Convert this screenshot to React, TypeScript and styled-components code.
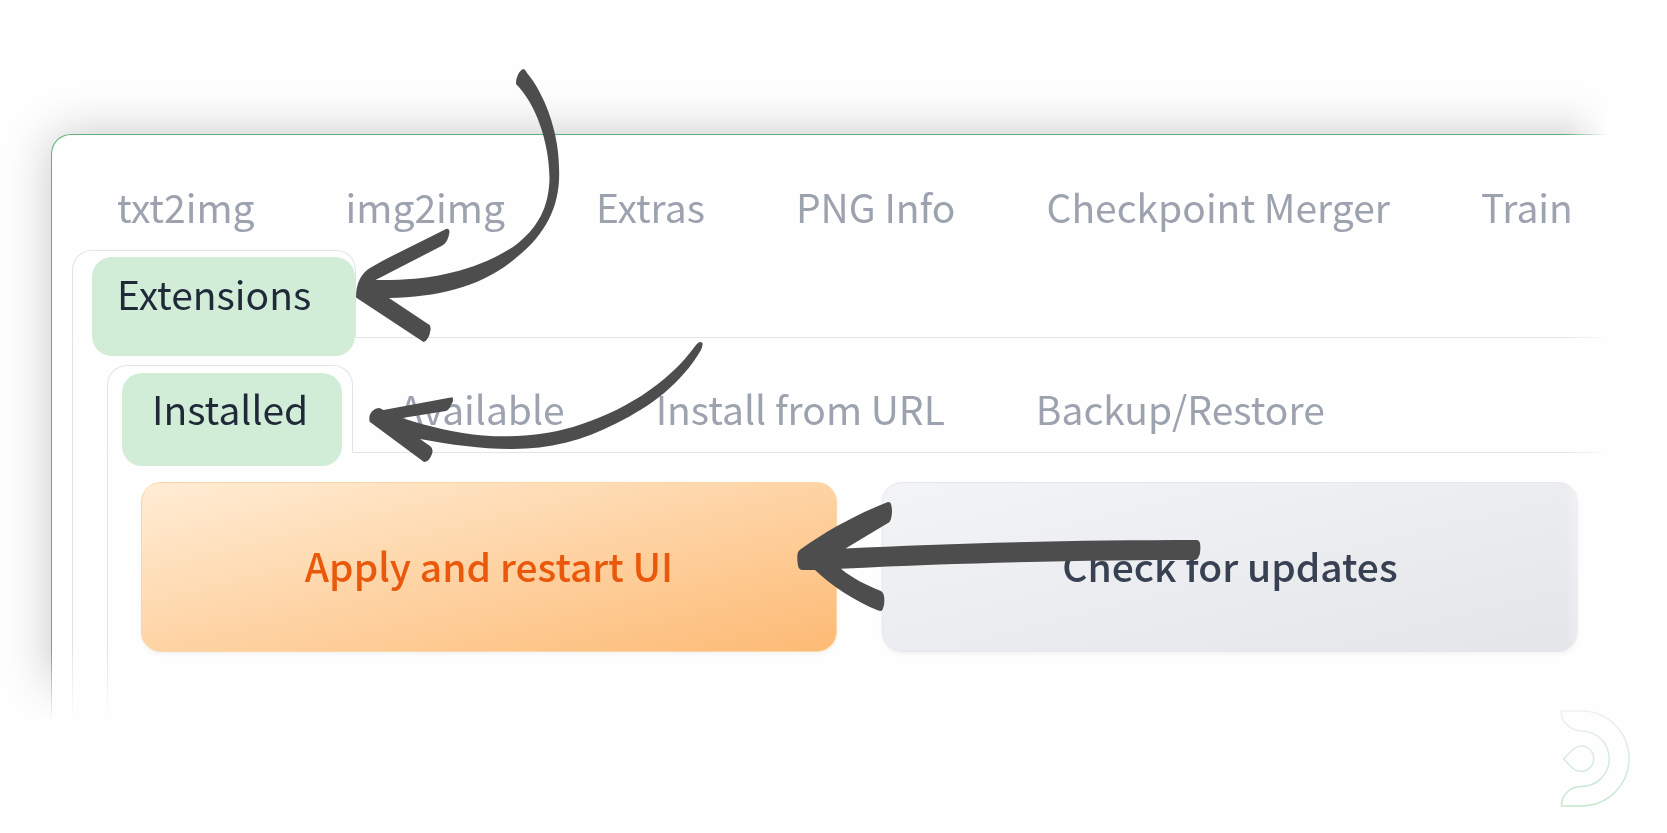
import React from "react";
import styled, { createGlobalStyle } from "styled-components";

const GlobalStyle = createGlobalStyle`
  *, *::before, *::after { box-sizing: border-box; }
  body {
    margin: 0;
    background: #fefefe;
    font-family: "Noto Sans CJK SC", "Noto Sans", sans-serif;
  }
`;

const Page = styled.main`
  min-height: 100vh;
  display: flex;
  flex-direction: column;
  overflow: hidden;
`;

/* Fades the window out towards the right and the bottom edge. */
const Fade = styled.div`
  padding: 134px 16px 0 51px;
  mask-image:
    linear-gradient(to right, #000 calc(100% - 102px), transparent calc(100% - 60px)),
    linear-gradient(to bottom, #000 calc(100% - 72px), transparent 100%);
  mask-composite: intersect;
`;

const Window = styled.section`
  padding: 28px 16px 0 20px;
  border: 1px solid #5cb27a;
  border-bottom: 0;
  border-radius: 20px 20px 0 0;
  background: #fefefe;
  box-shadow: 0 0 48px rgba(0, 0, 0, 0.22);
`;

const TabList = styled.div`
  display: flex;
  flex-wrap: wrap;
  column-gap: 1px;
  border-bottom: 1px solid #e3e4e7;
`;

/* The active tab is one pixel taller, so that it covers the line below the list. */
const Tab = styled.button<{ $active?: boolean }>`
  height: ${(p) => (p.$active ? 88 : 87)}px;
  padding: 0 44px 2px;
  border: 1px solid transparent;
  border-radius: 20px 20px 0 0;
  background: none;
  color: ${(p) => (p.$active ? "#1f2937" : "#9ca3af")};
  font: inherit;
  font-size: 39px;
  line-height: 56px;
  white-space: nowrap;
  cursor: pointer;
  ${(p) => p.$active && "border-color: #e3e4e7; border-bottom-color: #fefefe; background: #fefefe;"}
`;

const Target = styled.div<{ $inset?: string }>`
  position: relative;
  display: flex;
  height: 87px;

  &::before {
    content: "";
    position: absolute;
    z-index: 1;
    inset: ${(p) => p.$inset};
    border-radius: 20px;
    background: #d1ecd7;
  }
`;

const TabLabel = styled.span`
  position: relative;
  z-index: 2;
`;

const TabPanel = styled.div<{ $nested?: boolean }>`
  padding: ${(p) => (p.$nested ? "29px 56px 70px 33px" : "27px 0 0 34px")};
  border-left: 1px solid #e3e4e7;
`;

const Actions = styled.div`
  display: grid;
  grid-template-columns: 1fr 1fr;
  gap: 45px;
`;

const Cell = styled.div`
  position: relative;
  display: flex;
`;

const ActionButton = styled.button<{ $primary?: boolean }>`
  flex: 1;
  height: 170px;
  padding: 0 16px 4px;
  border: 1px solid ${(p) => (p.$primary ? "#fbd6a6" : "#e5e7eb")};
  border-radius: 20px;
  background: ${(p) =>
    p.$primary
      ? "linear-gradient(to bottom right, #ffedd5, #fdba74)"
      : "linear-gradient(to bottom right, #f3f4f6, #e3e5e9)"};
  box-shadow: 0 2px 4px rgba(0, 0, 0, 0.05);
  color: ${(p) => (p.$primary ? "#ea580c" : "#374151")};
  font: inherit;
  font-size: 39px;
  font-weight: 500;
  line-height: 56px;
  cursor: pointer;
`;

const Arrow = styled.svg<{ $left: string; $top: number }>`
  position: absolute;
  z-index: 3;
  left: ${(p) => p.$left};
  top: ${(p) => p.$top}px;
  fill: #4d4d4d;
  pointer-events: none;
`;

const Footer = styled.footer`
  display: flex;
  justify-content: flex-end;
  margin-top: -12px;
  padding: 0 37px 24px;
`;

const mainTabs = ["txt2img", "img2img", "Extras", "PNG Info", "Checkpoint Merger", "Train"];
const extensionTabs = ["Available", "Install from URL", "Backup/Restore"];

export default function App() {
  return (
    <>
      <GlobalStyle />
      <Page>
        <Fade>
          <Window>
            <TabList role="tablist" aria-label="Sections">
              {mainTabs.map((name) => (
                <Tab key={name} role="tab" aria-selected={false}>
                  {name}
                </Tab>
              ))}
              <Target $inset="7px 1px -19px 20px">
                <Tab $active role="tab" aria-selected>
                  <TabLabel>Extensions</TabLabel>
                </Tab>
                <Arrow $left="calc(100% - 6px)" $top={-190} width="220" height="290" viewBox="350 60 220 290" aria-hidden="true">
                  <path d="M516 84C516 77 519 71 523 69Q525 69 527 73C544 93 559 132 559 168C561 205 546 234 517 257C484 286 440 297 389 298L428 324Q431 325 430.500 330Q429 340 423.500 342L356 297.500C356 282 362 273 370 268C394 254 421 242 446 229Q449 228 449.500 232Q448 243 441.500 246L375.500 280C425 281 472 273 513 247C539 228 549 206 549.500 178C549 140 535 103 516 84Z" />
                </Arrow>
              </Target>
            </TabList>
            <TabPanel role="tabpanel">
              <TabList role="tablist" aria-label="Extensions">
                <Target $inset="8px 11px -14px 15px">
                  <Tab $active role="tab" aria-selected>
                    <TabLabel>Installed</TabLabel>
                  </Tab>
                  <Arrow $left="calc(100% + 7px)" $top={-35} width="350" height="140" viewBox="360 330 350 140" aria-hidden="true">
                    <path d="M696 345Q699 341 702 342.500Q703.500 344 701 350C681 384 651 406 617 423C582 441 549 449 513 449C483 449 452 445 420 439L430 446Q433 448 432.500 452C431 458 428 462 424 462L370 422Q369 421 369.500 416C371 411 375 408 379.500 408L383.500 410L448 398L452.500 397.300Q454 401 451.500 404Q449 410 446 411L402 418C430 427 456 433 483 435.500C516 438 545 435 573 427C622 412 667 385 696 345Z" />
                  </Arrow>
                </Target>
                {extensionTabs.map((name) => (
                  <Tab key={name} role="tab" aria-selected={false}>
                    {name}
                  </Tab>
                ))}
              </TabList>
              <TabPanel $nested role="tabpanel">
                <Actions>
                  <Cell>
                    <ActionButton $primary>Apply and restart UI</ActionButton>
                    <Arrow $left="calc(100% - 47px)" $top={8} width="420" height="130" viewBox="790 490 420 130" aria-hidden="true">
                      <path d="M797.500 562C797 556 797 551 801 549C829 529 858 514 886 502.700Q890 501 891 504Q893 511 891 519Q890 522 888 523L845.500 548.500C950 543 1082 540 1197 540Q1199 540 1200 543C1201 549 1200 555 1198 558Q1197 560 1193 560C1102 560 978 562 841 568.700C852 578 866 585 881 591Q884 593 884 596C885 602 884 608 881.500 611Q879 611 877 610C855 601 833 587 815 570L802 570Q798 570 797.500 562Z" />
                    </Arrow>
                  </Cell>
                  <Cell>
                    <ActionButton>Check for updates</ActionButton>
                  </Cell>
                </Actions>
              </TabPanel>
            </TabPanel>
          </Window>
        </Fade>
        <Footer>
          <svg width="70" height="98" viewBox="0 0 70 98" fill="none" role="img" aria-label="Logo">
            <defs>
              <linearGradient id="logoStroke" gradientUnits="userSpaceOnUse" x1="0" y1="0" x2="0" y2="98">
                <stop offset="0" stopColor="#edf1ee" />
                <stop offset="1" stopColor="#c2e6cb" />
              </linearGradient>
            </defs>
            <g stroke="url(#logoStroke)" strokeWidth="1.500">
              <path d="M1 1H21.500A47.500 47.500 0 0 1 21.500 96H1.500C1.500 84 11 76.500 21.500 76.500A27.700 27.700 0 0 0 21.500 21C10 20 1 12 1 1Z" />
              <path d="M3.500 49L13 39.500C17 36 19 36 21 36A12.700 12.700 0 0 1 21 61.400C17 61.400 15 60 13 58.500Z" />
            </g>
          </svg>
        </Footer>
      </Page>
    </>
  );
}
